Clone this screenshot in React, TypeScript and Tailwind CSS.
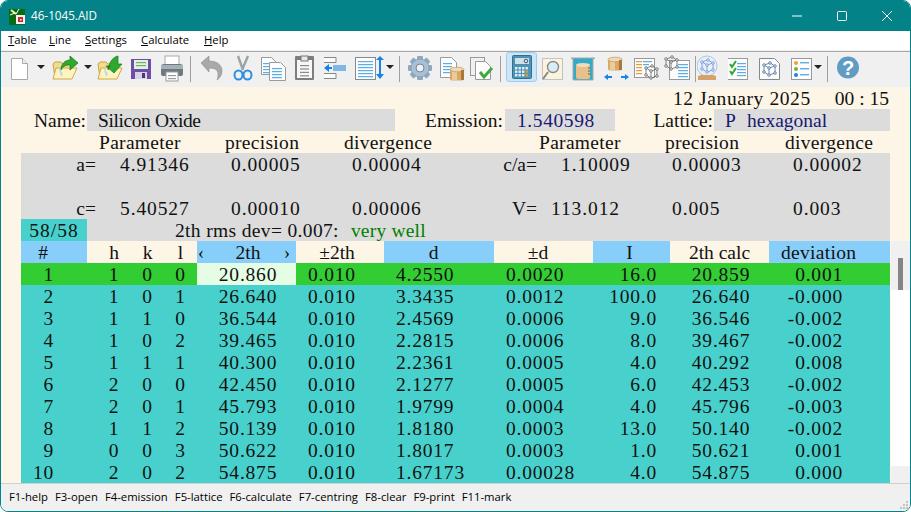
import React from 'react';

const serif = { fontFamily: '"Liberation Serif", serif' };

const rows = [
  ['1', '1', '0', '0', '20.860', '0.010', '4.2550', '0.0020', '16.0', '20.859', '0.001'],
  ['2', '1', '0', '1', '26.640', '0.010', '3.3435', '0.0012', '100.0', '26.640', '-0.000'],
  ['3', '1', '1', '0', '36.544', '0.010', '2.4569', '0.0006', '9.0', '36.546', '-0.002'],
  ['4', '1', '0', '2', '39.465', '0.010', '2.2815', '0.0006', '8.0', '39.467', '-0.002'],
  ['5', '1', '1', '1', '40.300', '0.010', '2.2361', '0.0005', '4.0', '40.292', '0.008'],
  ['6', '2', '0', '0', '42.450', '0.010', '2.1277', '0.0005', '6.0', '42.453', '-0.002'],
  ['7', '2', '0', '1', '45.793', '0.010', '1.9799', '0.0004', '4.0', '45.796', '-0.003'],
  ['8', '1', '1', '2', '50.139', '0.010', '1.8180', '0.0003', '13.0', '50.140', '-0.002'],
  ['9', '0', '0', '3', '50.622', '0.010', '1.8017', '0.0003', '1.0', '50.621', '0.001'],
  ['10', '2', '0', '2', '54.875', '0.010', '1.67173', '0.00028', '4.0', '54.875', '0.000'],
];

const tableCols = 'grid grid-rows-[22px] grid-cols-[66px_44px_33px_33px_99px_88px_110px_99px_77px_99px_121px]';

// every toolbar icon is drawn in a box 30px high, x measured from the box's left edge
const Ico = ({ w, dx = 0, children }: { w: number; dx?: number; children?: React.ReactNode }) => (
  <svg width={w} height={30} viewBox={`0 0 ${w} 30`} className="shrink-0">
    <g transform={`translate(${dx} 0)`}>{children}</g>
  </svg>
);

const Caret = ({ w, x }: { w: number; x: number }) => (
  <Ico w={w}>
    <path d={`M${x} 13h8l-4 4z`} fill="#222" />
  </Ico>
);

const Sep = ({ w }: { w: number }) => (
  <div className="shrink-0 flex justify-center" style={{ width: w }}>
    <div className="w-px h-[26px] mt-[3px] bg-[#a0a0a0]" />
  </div>
);

const Folder = ({ arrow }: { arrow: string }) => (
  <>
    <path d="M1 12l2-2h6l2 2h8l-1 14H3z" fill="#f4dc8e" stroke="#c9a23e" />
    <path d="M1 27l3-11h21l-5 11z" fill="#fff3c0" stroke="#d1a843" />
    <path d="M6 14l5 8-2 3z" fill="#bcd9ee" />
    {arrow === 'up' ? (
      <path d="M9 18c0-6 4-10 9-10V4l8 7-8 7v-5c-4 0-7 1-9 5z" fill="#2ea82e" stroke="#17761a" strokeWidth="0.7" />
    ) : (
      <path d="M11 18c1-8 5-13 10-14v8h4l-8 9-8-7h4z" fill="#2ea82e" stroke="#17761a" strokeWidth="0.7" />
    )}
  </>
);

const Lines = ({ x, y, w, n, gap = 3, c = '#5aaee8' }: { x: number; y: number; w: number; n: number; gap?: number; c?: string }) => (
  <>
    {Array.from({ length: n }).map((_, i) => (
      <rect key={i} x={x} y={y + i * gap} width={w} height="1.2" fill={c} />
    ))}
  </>
);

const Page = ({ x, y, w, h }: { x: number; y: number; w: number; h: number }) => (
  <path d={`M${x + 0.5} ${y + 0.5}h${w - 5}l5 5v${h - 5}h-${w}z`} fill="#fdfdfd" stroke="#9a9a9a" />
);

const Cube = ({ x, y, s = 1, c = '#666' }: { x: number; y: number; s?: number; c?: string }) => (
  <g transform={`translate(${x} ${y}) scale(${s})`} stroke={c} strokeWidth="0.8" fill="none">
    <path d="M2 3l6-2 5 3-6 2zM2 3v7l5 3V6M13 4v7l-6 2" />
    {[[2, 3], [8, 1], [13, 4], [7, 6], [2, 10], [7, 13], [13, 11]].map(([a, b], i) => (
      <circle key={i} cx={a} cy={b} r="1.3" fill="#f4f4f4" />
    ))}
  </g>
);

const Drum = ({ x, y }: { x: number; y: number }) => (
  <g transform={`translate(${x} ${y})`}>
    <rect x="0" y="1.5" width="14" height="12" rx="2" fill="#d9a96a" />
    <rect x="2" y="2" width="5" height="11" fill="#eccb9b" />
    <ellipse cx="7" cy="2.5" rx="7" ry="2.3" fill="#f0d9b5" stroke="#b98a50" strokeWidth="0.6" />
    <rect x="11" y="3" width="3" height="10" fill="#a9773c" />
  </g>
);

const Toolbar = () => (
  <div className="h-[36px] bg-[#f0f0f0] border-t border-[#a8a8a8] flex items-center pl-[7px] pb-[5px] shrink-0">
    <Ico w={25}>
      <path d="M3.5 6.5h11l5 5v16h-16z" fill="#fff" stroke="#a8a8a8" />
      <path d="M14.5 6.5v5h5" fill="#eee" stroke="#a8a8a8" />
    </Ico>
    <Caret w={16} x={4} />
    <Ico w={32} dx={3}><Folder arrow="up" /></Ico>
    <Caret w={14} x={3} />
    <Ico w={31} dx={2}><Folder arrow="down" /></Ico>
    <Ico w={30}>
      <path d="M5 7h20v20H5z" fill="#6e4fa8" />
      <rect x="8" y="8" width="14" height="9" fill="#e4f1e0" />
      <rect x="10" y="10" width="10" height="1.2" fill="#6cb36c" />
      <rect x="10" y="13" width="10" height="1.2" fill="#6cb36c" />
      <rect x="9" y="20" width="12" height="7" fill="#d9d3e6" />
      <rect x="16" y="21" width="3" height="5" fill="#4a3580" />
    </Ico>
    <Ico w={30}>
      <rect x="9" y="4" width="14" height="9" fill="#fff" stroke="#aaa" />
      <path d="M5 15q0-3 3-3h16q3 0 3 3v7q0 2-3 2H8q-3 0-3-2z" fill="#6e7a82" />
      <rect x="5" y="13" width="22" height="4" fill="#a6b0b6" />
      <circle cx="24" cy="15" r="1" fill="#6fcf6f" />
      <rect x="10" y="20" width="12" height="9" fill="#fff" stroke="#999" />
      <Lines x={12} y={23} w={8} n={2} c="#999" />
    </Ico>
    <Sep w={9} />
    <Ico w={33}>
      <path d="M6 11l8-7v5c8 0 13 4 13 10 0 4-2 7-5 9 1-2 1-4 1-6 0-4-3-6-9-6v4z" fill="#a9a9a9" stroke="#8a8a8a" strokeWidth="0.6" />
    </Ico>
    <Ico w={27}>
      <path d="M10 4l5 14M20 4l-6 14" stroke="#9aa3aa" strokeWidth="2.4" fill="none" />
      <ellipse cx="10.5" cy="23" rx="4" ry="4.6" fill="none" stroke="#2f8fe0" strokeWidth="2" />
      <ellipse cx="19.5" cy="23" rx="4" ry="4.6" fill="none" stroke="#2f8fe0" strokeWidth="2" />
    </Ico>
    <Ico w={35}>
      <Page x={6} y={5} w={15} h={17} />
      <Lines x={8} y={11} w={9} n={4} />
      <Page x={14} y={10} w={16} h={18} />
      <Lines x={17} y={16} w={10} n={4} />
    </Ico>
    <Ico w={29}>
      <rect x="5" y="4" width="19" height="24" rx="1" fill="#7d7d7d" />
      <rect x="7" y="8" width="15" height="18" fill="#f7f7f7" />
      <rect x="11" y="4" width="7" height="5" fill="#e8e8e8" stroke="#777" />
      <Lines x={10} y={13} w={9} n={4} gap={3.4} c="#8a8a8a" />
    </Ico>
    <Ico w={31}>
      <path d="M5 5.5h12v5H5" fill="#fafafa" stroke="#888" />
      <path d="M5 21.5h12v5H5" fill="#fafafa" stroke="#888" />
      <rect x="14" y="13" width="13" height="6" fill="#7fb8e6" />
      <path d="M5 16l5-4v3h3v2h-3v3z" fill="#1683e8" />
    </Ico>
    <Ico w={33}>
      <rect x="5.5" y="5.5" width="20" height="22" fill="#fcfcfc" stroke="#8a8a8a" />
      <Lines x={8} y={9} w={15} n={6} />
    </Ico>
    <div className="w-[10px] shrink-0 -ml-[8px]">
      <svg width="10" height="30" viewBox="0 0 10 30">
        <path d="M5 4l4 4H6v14h3l-4 5-4-5h3V8H1z" fill="#1683e8" />
      </svg>
    </div>
    <Caret w={10} x={1} />
    <Sep w={8} />
    <Ico w={34} dx={-1}>
      {[0, 45, 90, 135].map((a) => (
        <rect key={a} x="15" y="4" width="6" height="24" rx="1" fill="#8fa9c0" transform={`rotate(${a} 18 16)`} />
      ))}
      <circle cx="18" cy="16" r="9" fill="#a9c0d4" stroke="#7e95a9" strokeWidth="0.7" />
      <circle cx="18" cy="16" r="4" fill="#f0f0f0" stroke="#71869a" />
    </Ico>
    <Ico w={31}>
      <Page x={3} y={5} w={16} h={20} />
      <Lines x={6} y={11} w={9} n={4} />
      <Drum x={13} y={15} />
    </Ico>
    <Ico w={30} dx={-3}>
      <rect x="5.5" y="5.5" width="14" height="18" fill="#f0f0f0" stroke="#999" />
      <Page x={10} y={9} w={15} h={18} />
      <path d="M15 20l4 5 8-9" stroke="#3fa93f" strokeWidth="3" fill="none" />
    </Ico>
    <Sep w={5} />
    <div className="w-[31px] h-[30px] ml-[3px] bg-[#cde6f7] border border-[#99cdf2] rounded-[3px] flex items-center justify-center shrink-0">
      <svg width="20" height="24" viewBox="0 0 20 24">
        <rect x="0.5" y="0.5" width="19" height="23" rx="1" fill="#4d94b8" stroke="#2f6f90" />
        <rect x="2.5" y="2.5" width="15" height="7" fill="#cfe0ea" stroke="#2f6f90" strokeWidth="0.6" />
        <circle cx="14" cy="6" r="1.8" fill="none" stroke="#475a66" />
        {[0, 1, 2].map((r) =>
          [0, 1, 2, 3].map((c) => (
            <rect key={`${r}-${c}`} x={3 + c * 3.5} y={12 + r * 3.5} width="2.4" height="2.4" fill={c === 3 && r > 0 ? '#e89a3c' : '#e6eef3'} />
          )),
        )}
      </svg>
    </div>
    <Ico w={30}>
      <rect x="5.5" y="6.5" width="20" height="21" fill="#fbf3dc" stroke="#c2c2c2" />
      <circle cx="16" cy="15" r="5.5" fill="#d8ecfa" stroke="#8a8a8a" strokeWidth="1.4" />
      <path d="M11 20l-5 7" stroke="#888" strokeWidth="2" />
    </Ico>
    <Ico w={31} dx={1}>
      <path d="M3 6h24l-2 1v21H5V7z" fill="#35aac7" stroke="#a9a9a9" />
      <rect x="8" y="13" width="14" height="14" rx="2" fill="#e7c08b" />
      <ellipse cx="15" cy="13" rx="7" ry="2" fill="#f3dcb8" />
      <path d="M20 16h2M20 19h2M20 22h2" stroke="#555" />
    </Ico>
    <Ico w={33} dx={5}>
      <Drum x={5} y={5} />
      <path d="M1 25l4-3v2h4v2H5v2zM26 25l-4-3v2h-4v2h4v2z" fill="#1683e8" />
    </Ico>
    <Ico w={32}>
      <rect x="3.5" y="6.5" width="20" height="19" fill="#fcfcfc" stroke="#999" />
      <Lines x={5} y={9} w={6} n={5} c="#e89a3c" />
      <rect x="12" y="9" width="9" height="1.2" fill="#5aaee8" />
      <rect x="12" y="12" width="6" height="1.2" fill="#5aaee8" />
      <Cube x={13} y={13} s={1} />
    </Ico>
    <Ico w={31} dx={-3}>
      <rect x="9.5" y="8.5" width="20" height="19" fill="#fcfcfc" stroke="#999" />
      <Lines x={18} y={12} w={10} n={5} />
      <Cube x={4} y={4} s={1} />
    </Ico>
    <Sep w={3} />
    <Ico w={31} dx={-2}>
      <circle cx="12" cy="14" r="10" fill="#e7f0fa" stroke="#a9c6e6" />
      <Cube x={5} y={7} s={1} c="#6d8fd0" />
      <path d="M3 24l3-1h12l3 1v4H3z" fill="#d7a26a" />
    </Ico>
    <Ico w={31} dx={-4}>
      <rect x="3.5" y="6.5" width="20" height="21" fill="#fcfcfc" stroke="#999" />
      <Lines x={13} y={11} w={9} n={5} gap={3} />
      <path d="M6 12l2 3 4-6M6 19l2 3 4-6" stroke="#2ea82e" strokeWidth="2" fill="none" />
    </Ico>
    <Ico w={31} dx={-4}>
      <path d="M4.5 6.5h15l5 5v16h-20z" fill="#fcfcfc" stroke="#888" />
      <Cube x={7} y={10} s={1} c="#4d6fa0" />
    </Ico>
    <Ico w={24}>
      <rect x="1.5" y="6.5" width="20" height="21" fill="#fcfcfc" stroke="#999" />
      <circle cx="6" cy="11" r="2" fill="#f0a030" />
      <circle cx="6" cy="17" r="2" fill="#7ab030" />
      <circle cx="6" cy="23" r="2" fill="#1683e8" />
      <rect x="10" y="10" width="9" height="1.4" fill="#5aaee8" />
      <rect x="10" y="16" width="9" height="1.4" fill="#5aaee8" />
      <rect x="10" y="22" width="9" height="1.4" fill="#5aaee8" />
    </Ico>
    <Caret w={10} x={0} />
    <Sep w={6} />
    <Ico w={32}>
      <circle cx="18" cy="15.5" r="11" fill="#5f9bc2" />
      <text x="18" y="22.5" textAnchor="middle" fontSize="20" fontWeight="700" fill="#fff" fontFamily='"Liberation Sans", sans-serif'>?</text>
    </Ico>
  </div>
);

const ParamRow = ({ l1, v1, p1, d1, l2, v2, p2, d2, pad }: Record<string, string>) => (
  <div className="grid grid-rows-[22px] grid-cols-[75px_135px_121px_120px_65px_135px_121px_97px] h-[22px]">
    <span className="text-right">{l1}</span>
    <span className="pl-[24px] tracking-[0.9px]">{v1}</span>
    <span className="tracking-[0.9px]">{p1}</span>
    <span className="tracking-[0.9px]">{d1}</span>
    <span className="text-right">{l2}</span>
    <span className={pad + ' tracking-[0.9px]'}>{v2}</span>
    <span className="tracking-[0.9px]">{p2}</span>
    <span className="tracking-[0.9px]">{d2}</span>
  </div>
);

const App = () => (
  <div className="w-[911px] h-[512px] bg-white overflow-hidden">
    <div className="w-full h-full border border-[#038387] rounded-[8px] overflow-hidden flex flex-col">
      {/* title bar */}
      <div className="h-[30px] bg-[#038387] flex items-center shrink-0 text-white" style={{ fontFamily: '"Open Sans", sans-serif' }}>
        <svg width="17" height="17" viewBox="0 0 17 17" className="ml-[8px] shrink-0">
          <rect x="0" y="1" width="16" height="16" fill="#0a6b12" />
          <path d="M2 2l5 4" stroke="#f6f0a0" strokeWidth="2" />
          <path d="M7 6l3-5M1 7l5-2" stroke="#fff" strokeWidth="1" />
          <rect x="7" y="7" width="9" height="9" fill="#f4f4f4" />
          <rect x="9" y="9" width="5" height="5" fill="#d62828" />
          <rect x="11" y="11" width="1.5" height="1.5" fill="#fff" />
        </svg>
        <span className="ml-[5px] text-[11.7px] leading-none">46-1045.AID</span>
        <div className="ml-auto flex items-center mr-[18px] gap-[35px]">
          <svg width="10" height="10" viewBox="0 0 10 10"><path d="M0 5h10" stroke="#fff" /></svg>
          <svg width="10" height="10" viewBox="0 0 10 10"><rect x="0.5" y="0.5" width="9" height="9" rx="1" fill="none" stroke="#fff" /></svg>
          <svg width="10" height="10" viewBox="0 0 10 10"><path d="M0 0l10 10M10 0L0 10" stroke="#fff" /></svg>
        </div>
      </div>

      {/* menu */}
      <div className="h-[20px] bg-white border-b border-[#f0f0f0] flex items-center pl-[7px] text-[11.3px] text-black shrink-0" style={{ fontFamily: '"Open Sans", sans-serif' }}>
        <span className="w-[41px]"><u>T</u>able</span>
        <span className="w-[36px]"><u>L</u>ine</span>
        <span className="w-[56px]"><u>S</u>ettings</span>
        <span className="w-[63px]"><u>C</u>alculate</span>
        <span><u>H</u>elp</span>
      </div>

      <Toolbar />

      {/* sheet */}
      <div className="flex-1 bg-[#fdf5e6] pl-[20px] text-[19.5px] leading-[24px] text-[#111]" style={serif}>
        <div className="w-[869px]">
          <div className="h-[22px] flex justify-end pr-px">
            <span className="tracking-[0.6px]">12 January 2025</span>
            <span className="ml-[24px]">00 : 15</span>
          </div>

          <div className="h-[22px] flex">
            <span className="w-[66px] text-right pr-[1px]">Name:</span>
            <span className="w-[308px] bg-[#dcdcdc] pl-[11px] tracking-[-0.4px]">Silicon Oxide</span>
            <span className="w-[110px] text-right pr-[2px]">Emission:</span>
            <span className="w-[110px] bg-[#dcdcdc] pl-[12px] text-[#191970] tracking-[0.6px]">1.540598</span>
            <span className="w-[99px] text-right pr-px">Lattice:</span>
            <span className="flex-1 bg-[#dcdcdc] pl-[11px] text-[#191970] flex">
              <span className="w-[22px]">P</span>
              <span>hexagonal</span>
            </span>
          </div>

          <div className="h-[22px] grid grid-rows-[22px] grid-cols-[126px_119px_195px_126px_120px_105px] pl-[78px] tracking-[0.3px]">
            <span>Parameter</span>
            <span>precision</span>
            <span>divergence</span>
            <span>Parameter</span>
            <span>precision</span>
            <span>divergence</span>
          </div>

          <div className="bg-[#dcdcdc]">
            <ParamRow l1="a=" v1="4.91346" p1="0.00005" d1="0.00004" l2="c/a=" v2="1.10009" p2="0.00003" d2="0.00002" pad="pl-[24px]" />
            <div className="h-[22px]" />
            <ParamRow l1="c=" v1="5.40527" p1="0.00010" d1="0.00006" l2="V=" v2="113.012" p2="0.005" d2="0.003" pad="pl-[14px]" />
            <div className="h-[22px] flex">
              <span className="w-[66px] bg-[#48d1cc] text-center tracking-[1px]">58/58</span>
              <span className="ml-[88px] tracking-[0.35px]">2th rms dev= 0.007:</span>
              <span className="ml-[12px] text-[#008000] tracking-[0.2px]">very well</span>
            </div>
          </div>
        </div>

        <div className="flex items-stretch">
          <div className="w-[869px]">
            <div className={tableCols + ' h-[22px] text-center'}>
              <span className="bg-[#87cefa] pr-[22px]">#</span>
              <span className="pl-[10px]">h</span>
              <span>k</span>
              <span>l</span>
              <span className="bg-[#87cefa] flex justify-between pl-[1px] pr-[6px]">
                <span className="text-[18px]">‹</span>
                <span className="ml-[8px]">2th</span>
                <span className="text-[18px]">›</span>
              </span>
              <span className="pr-[6px]">±2th</span>
              <span className="bg-[#87cefa] pr-[11px]">d</span>
              <span className="pr-[11px]">±d</span>
              <span className="bg-[#87cefa] pr-[4px]">I</span>
              <span>2th calc</span>
              <span className="bg-[#87cefa] text-left pl-[12px] tracking-[0.3px]">deviation</span>
            </div>
            {rows.map((r, i) => (
              <div key={r[0]} className={tableCols + ' h-[22px] tracking-[0.8px] ' + (i === 0 ? 'bg-[#32cd32]' : 'bg-[#48d1cc]')}>
                <span className="text-right pr-[33px]">{r[0]}</span>
                <span className="text-center pl-[10px]">{r[1]}</span>
                <span className="text-center">{r[2]}</span>
                <span className="text-center">{r[3]}</span>
                <span className={'text-center pl-[3px] ' + (i === 0 ? 'bg-[#e4fde4]' : '')}>{r[4]}</span>
                <span className="pl-[12px]">{r[5]}</span>
                <span className="pl-[12px]">{r[6]}</span>
                <span className="pl-[12px]">{r[7]}</span>
                <span className="text-right pr-[13px]">{r[8]}</span>
                <span className="text-center pl-[3px]">{r[9]}</span>
                <span className="text-right pr-[47px]">{r[10]}</span>
              </div>
            ))}
          </div>
          {/* scrollbar */}
          <div className="ml-px w-[19px] bg-white flex flex-col justify-between">
            <div className="h-[49px] bg-[#f0f0f0] flex justify-center items-end">
              <div className="w-[5px] h-[32px] bg-[#858585]" />
            </div>
            <div className="h-[17px] bg-[#f0f0f0]" />
          </div>
        </div>
      </div>

      {/* status bar */}
      <div className="h-[28px] bg-[#f0f0f0] border-t border-[#d0d0d0] flex items-center pl-[8px] text-[11.3px] text-black shrink-0 gap-[7px] relative" style={{ fontFamily: '"Open Sans", sans-serif' }}>
        <span>F1-help</span>
        <span>F3-open</span>
        <span>F4-emission</span>
        <span>F5-lattice</span>
        <span>F6-calculate</span>
        <span>F7-centring</span>
        <span>F8-clear</span>
        <span>F9-print</span>
        <span>F11-mark</span>
        <svg width="10" height="10" viewBox="0 0 10 10" className="absolute right-[1px] bottom-[1px]">
          {[[7, 1], [4, 4], [7, 4], [1, 7], [4, 7], [7, 7]].map(([x, y]) => (
            <rect key={`${x}${y}`} x={x} y={y} width="2" height="2" fill="#c4c4c4" />
          ))}
        </svg>
      </div>
    </div>
  </div>
);

export default App;
